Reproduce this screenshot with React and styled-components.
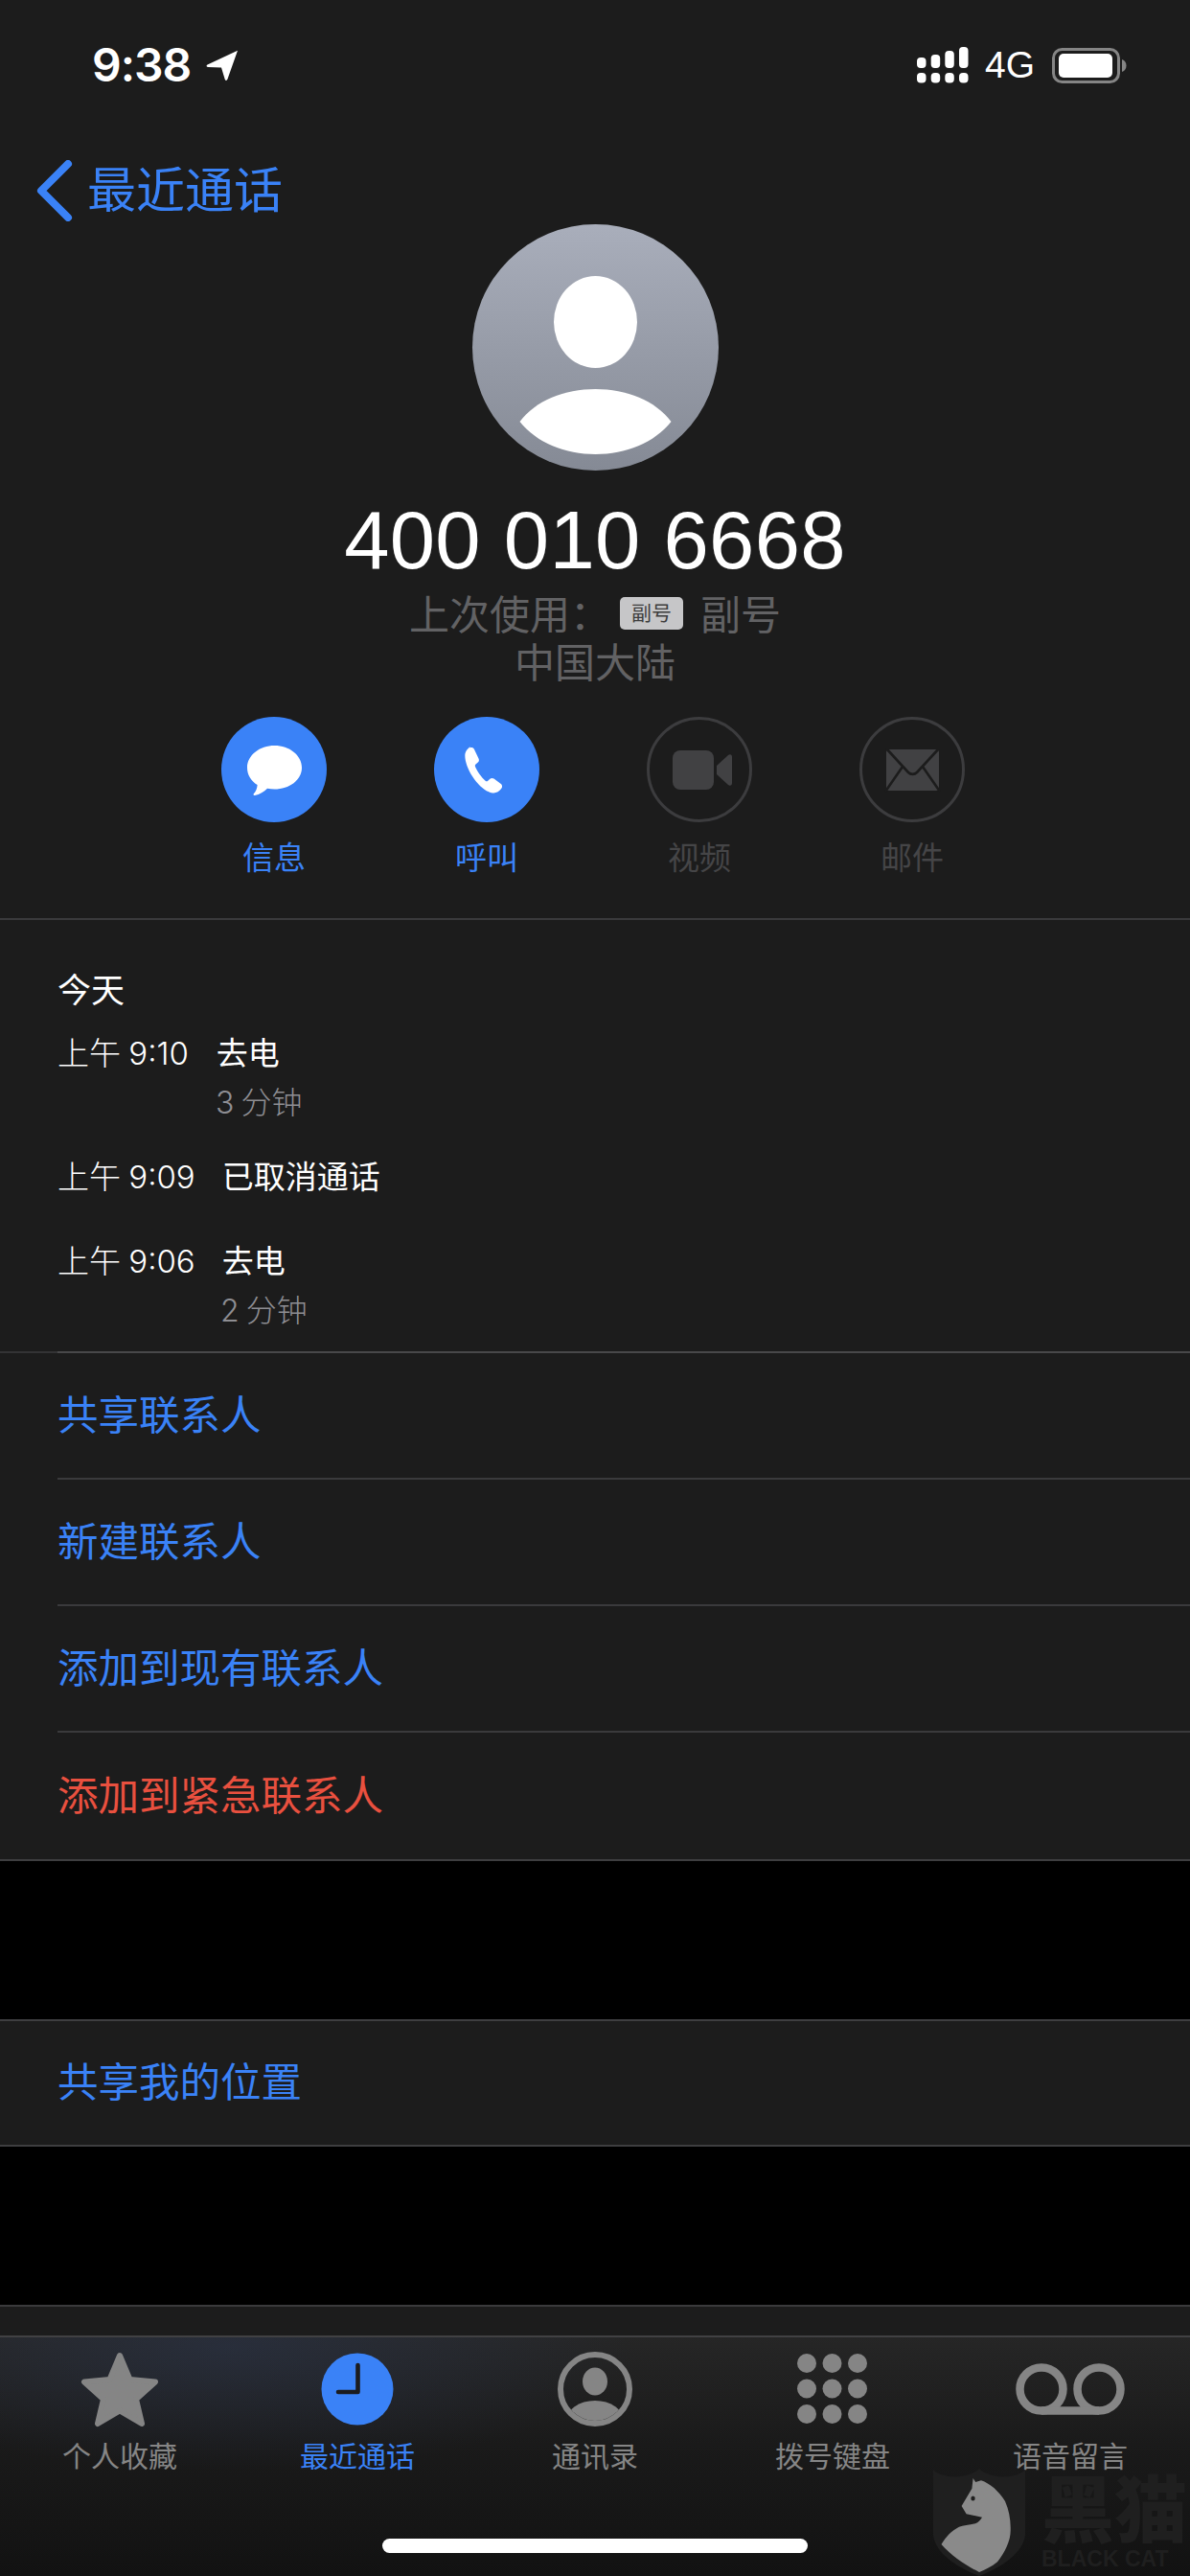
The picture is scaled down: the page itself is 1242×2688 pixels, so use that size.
import React from "react";
import styled, { createGlobalStyle } from "styled-components";

const BLUE = "#3a82f7";
const FONT = `Inter, "Noto Sans CJK SC", sans-serif`;

const GlobalStyle = createGlobalStyle`
    html, body {
        margin: 0;
        padding: 0;
        background: #000;
    }
    * {
        box-sizing: border-box;
    }
`;

const Page = styled.div`
    position: relative;
    width: 1242px;
    height: 2688px;
    overflow: hidden;
    background: #000;
    font-family: ${FONT};
    color: #fff;
    display: flex;
    flex-direction: column;
`;

const StatusBar = styled.div`
    height: 136px;
    background: #1c1c1c;
    display: flex;
    align-items: center;
    justify-content: space-between;
    padding: 0 66px 0 96px;
`;

const StatusLeft = styled.div`
    display: flex;
    align-items: center;
    gap: 16px;
`;

const StatusRight = styled.div`
    display: flex;
    align-items: center;
`;

const Time = styled.span`
    font-size: 48px;
    line-height: 50px;
    font-weight: 600;
    letter-spacing: -1px;
`;

const Network = styled.span`
    font-family: "Liberation Sans", sans-serif;
    font-size: 39px;
    line-height: 40px;
    margin: 0 18px 0 17px;
`;

const NavBar = styled.div`
    height: 98px;
    background: #1c1c1c;
    padding: 31px 0 0 38px;
    display: flex;
    align-items: flex-start;
    gap: 15px;
    color: ${BLUE};
`;

const BackLabel = styled.span`
    font-size: 51px;
    line-height: 64px;
    font-weight: 400;
`;

const Header = styled.div`
    background: #1c1c1c;
    display: flex;
    flex-direction: column;
    align-items: center;
    height: 726px;
    border-bottom: 2px solid #3a3a3c;
`;

const Avatar = styled.div`
    width: 257px;
    height: 257px;
    flex: none;
    border-radius: 50%;
    background: linear-gradient(#a9aebb, #858a95);
`;

const PhoneNumber = styled.div`
    font-family: "Liberation Sans", sans-serif;
    font-size: 85px;
    line-height: 100px;
    letter-spacing: 0.3px;
    margin-top: 23px;
`;

const SubLine = styled.div`
    display: flex;
    align-items: center;
    height: 50px;
    margin-top: ${(p) => p.$top || 0}px;
    font-size: 42px;
    font-weight: 400;
    color: #626264;
`;

const SimBadge = styled.span`
    width: 66px;
    height: 34px;
    margin: 4px 18px 0 10px;
    border-radius: 5px;
    background: #c6c6c8;
    color: #3d3d3d;
    font-size: 21px;
    line-height: 34px;
    text-align: center;
`;

const Actions = styled.div`
    display: flex;
    margin: 35px 4px 0 0;
`;

const Action = styled.div`
    width: 222px;
    display: flex;
    flex-direction: column;
    align-items: center;
    color: ${(p) => (p.$off ? "#454547" : BLUE)};
`;

const ActionCircle = styled.div`
    width: 110px;
    height: 110px;
    border-radius: 50%;
    background: ${(p) => (p.$off ? "transparent" : BLUE)};
    border: ${(p) => (p.$off ? "3px solid #3c3c3e" : "none")};
    position: relative;

    svg {
        display: block;
        position: absolute;
        left: ${(p) => (p.$off ? "-3px" : "0")};
        top: ${(p) => (p.$off ? "-3px" : "0")};
    }
`;

const ActionLabel = styled.span`
    font-size: 33px;
    line-height: 44px;
    margin-top: 15px;
    font-weight: 400;
`;

const History = styled.div`
    background: #1c1c1c;
    height: 450px;
    padding: 47px 0 0 60px;
`;

const DayTitle = styled.div`
    font-size: 35px;
    line-height: 52px;
    margin-bottom: 14px;
`;

const Entry = styled.div`
    min-height: 88px;
    padding-bottom: 25px;

    &:last-child {
        padding-bottom: 0;
    }
`;

const EntryMain = styled.div`
    display: flex;
    font-size: 33px;
    line-height: 52px;
`;

const EntryTime = styled.span`
    font-weight: 300;
    word-spacing: -1px;
    margin-right: ${(p) => p.$gap}px;
`;

const EntryType = styled.span`
    font-size: 33px;
    font-weight: 400;
`;

const EntryDuration = styled.div`
    font-size: 32px;
    line-height: 52px;
    font-weight: 300;
    color: #8e8e93;
    margin-left: ${(p) => p.$left}px;
    word-spacing: -2px;
`;

const RowGroup = styled.div`
    background: #1c1c1c;
    border-top: 2px solid #3e3e40;
    border-bottom: 2px solid #3e3e40;
    padding-left: 60px;
    flex: none;
`;

const FirstGroup = styled(RowGroup)`
    border-top: none;
    box-shadow: inset 0 2px 0 #333335;

    & > div:first-child {
        height: 134px;
        border-top: 2px solid #48484a;
    }
`;

const Row = styled.div`
    height: ${(p) => (p.$height ? p.$height : 132)}px;
    display: flex;
    align-items: center;
    padding-bottom: 8px;
    font-size: 42.5px;
    font-weight: 400;
    color: ${(p) => (p.$danger ? "#e9503f" : BLUE)};
    border-bottom: ${(p) => (p.$plain ? "none" : "2px solid #3a3a3c")};
`;

const Gap = styled.div`
    height: ${(p) => p.$height}px;
    flex: none;
`;

const SheetEnd = styled.div`
    height: 32px;
    background: #1c1c1c;
    border-top: 2px solid #3a3a3c;
    flex: none;
`;

const TabBar = styled.div`
    flex: 1;
    border-top: 2px solid #414143;
    background:
        radial-gradient(ellipse 420px 130px at 240px 10px, rgba(45, 58, 88, 0.42), transparent),
        linear-gradient(#262626, #1a1a1a 45%, #121212 100%);
    position: relative;
    display: flex;
    align-items: flex-start;
    padding: 12px 1px 0;
`;

const Tab = styled.div`
    width: 248.4px;
    display: flex;
    flex-direction: column;
    align-items: center;
    color: ${(p) => (p.$active ? BLUE : "#858585")};
`;

const TabIcon = styled.div`
    height: 84px;
    display: flex;
    align-items: center;
    justify-content: center;
`;

const TabLabel = styled.span`
    font-size: 30px;
    line-height: 40px;
    margin-top: 8px;
    font-weight: 400;
`;

const HomeBar = styled.div`
    position: absolute;
    left: 399px;
    bottom: 24px;
    width: 444px;
    height: 15px;
    border-radius: 8px;
    background: #fff;
`;

const Watermark = styled.div`
    position: absolute;
    left: 973px;
    top: 2575px;
    display: flex;
    gap: 17px;
    white-space: nowrap;
`;

const WatermarkText = styled.div`
    display: flex;
    flex-direction: column;
    padding-top: 8px;
    color: #1f1f1f;
    font-weight: 900;
`;

const WatermarkName = styled.span`
    font-size: 76px;
    line-height: 72px;
`;

const WatermarkEnglish = styled.span`
    font-family: "Liberation Sans", sans-serif;
    font-weight: 700;
    font-size: 23px;
    line-height: 30px;
`;

const Svg = ({ w, h, children, box }) => (
    <svg width={w} height={h} viewBox={box || `0 0 ${w} ${h}`} fill="currentColor">
        {children}
    </svg>
);

const LocationArrow = () => (
    <Svg w={34} h={32}>
        <path d="M33 0.8 L1.5 15.5 C0 16.3 0.5 18 2 18 L16 18.4 L19.8 31 C20.3 32.3 22 32.2 22.4 30.8 Z" />
    </Svg>
);

const SignalBars = () => {
    const bars = [
        { x: 0, top: 11, h: 11 },
        { x: 14.7, top: 8, h: 14 },
        { x: 29.3, top: 4, h: 18 },
        { x: 44, top: 0, h: 22 }
    ];
    return (
        <Svg w={54} h={38}>
            {bars.map((b) => (
                <g key={b.x}>
                    <rect x={b.x} y={b.top} width={9.5} height={b.h} rx={4} />
                    <rect x={b.x} y={27} width={9.5} height={10.5} rx={4} />
                </g>
            ))}
        </Svg>
    );
};

const Battery = () => (
    <Svg w={78} h={37}>
        <rect x={1.5} y={1.5} width={68} height={34} rx={9} fill="none" stroke="#858585" strokeWidth={3} />
        <rect x={7} y={6} width={56} height={25} rx={5} fill="#fff" />
        <path d="M73 12 C76 13 77.5 15.5 77.5 18.5 C77.5 21.5 76 24 73 25 Z" fill="#858585" />
    </Svg>
);

const BackChevron = () => (
    <Svg w={38} h={64}>
        <path d="M33 4 L5 32 L33 60" fill="none" stroke={BLUE} strokeWidth={8} strokeLinecap="round" strokeLinejoin="round" />
    </Svg>
);

const AvatarFigure = () => (
    <Svg w={257} h={257}>
        <ellipse cx={128.5} cy={102} rx={43.5} ry={48} fill="#fff" />
        <path
            d="M49.5 206 C66 184 96 172 128.5 172 C161 172 191 184 207.5 206 C190 228 160 240 128.5 240 C97 240 67 228 49.5 206 Z"
            fill="#fff"
        />
    </Svg>
);

const MessageIcon = () => (
    <Svg w={110} h={110}>
        <path
            d="M55.5 30 C71 30 84 40 84 53 C84 66 71 75.5 55.5 75.5 C53 75.5 50.5 75.2 48 74.7 C44.5 78 40 81 35 82 C33.5 82.2 33 81 34 80 C36 78 37.5 74.5 37.6 71 C31 67 27 60.5 27 53 C27 40 40 30 55.5 30 Z"
            fill="#fff"
        />
    </Svg>
);

const PhoneIcon = () => (
    <Svg w={110} h={110}>
        <path
            d="M37 32.5 c2-1 4-.5 5 1.5 l4.5 9.5 c.8 1.8.3 3.2-1 4.2 l-2 1.8 c-.8.7-.9 1.6-.4 2.7 c2 4.5 6.5 11 10.5 14.5 c.9.8 1.8.8 2.6.1 l2.2-2 c1.2-1.1 2.7-1.2 4.1-.2 l7 5.2 c1.8 1.3 2 3.4.8 5 c-2.5 3.4-5.5 5-9 4.6 c-7-.8-15-8-21-17 c-5-7.5-8-16-8-22 c0-4.2 3-7.5 5.7-9.4 z"
            fill="#fff"
        />
    </Svg>
);

const VideoIcon = () => (
    <Svg w={110} h={110}>
        <rect x={27} y={35} width={43} height={41} rx={8} fill="#414143" />
        <path d="M73 51 L85 40 C87 38.5 89 39.5 89 42 L89 69 C89 71.5 87 72.5 85 71 L73 60 Z" fill="#414143" />
    </Svg>
);

const MailIcon = () => (
    <Svg w={110} h={110}>
        <rect x={28} y={34} width={55} height={43} rx={3} fill="#414143" />
        <path
            d="M28 33 L51 58 C53.5 60.5 57.5 60.5 60 58 L83 33 M27 78 L45 52 M84 78 L66 52"
            fill="none"
            stroke="#1c1c1c"
            strokeWidth={2.6}
        />
    </Svg>
);

const StarIcon = () => (
    <Svg w={84} h={80}>
        <path
            d="M42 5 L52.5 30 L79 32.5 L59 50.5 L65 76 L42 62.5 L19 76 L25 50.5 L5 32.5 L31.5 30 Z"
            stroke="currentColor"
            strokeWidth={6}
            strokeLinejoin="round"
        />
    </Svg>
);

const ClockIcon = () => (
    <Svg w={76} h={76}>
        <circle cx={38} cy={38} r={37.5} />
        <path d="M38.5 13 L38.5 41 L18 41" fill="none" stroke="#1c1c1e" strokeWidth={4.6} strokeLinecap="round" strokeLinejoin="round" />
    </Svg>
);

const ContactsIcon = () => (
    <Svg w={78} h={78}>
        <defs>
            <clipPath id="contact-clip">
                <circle cx={39} cy={39} r={33} />
            </clipPath>
        </defs>
        <circle cx={39} cy={39} r={36} fill="none" stroke="currentColor" strokeWidth={6} />
        <ellipse cx={39} cy={31} rx={13} ry={14.5} />
        <ellipse cx={39} cy={72} rx={30} ry={21} clipPath="url(#contact-clip)" />
    </Svg>
);

const KeypadIcon = () => {
    const cells = [0, 1, 2, 3, 4, 5, 6, 7, 8];
    return (
        <Svg w={74} h={74}>
            {cells.map((c) => (
                <circle key={c} cx={10 + (c % 3) * 26.5} cy={10 + Math.floor(c / 3) * 26.5} r={10} />
            ))}
        </Svg>
    );
};

const VoicemailIcon = () => (
    <Svg w={114} h={54}>
        <circle cx={27} cy={27} r={22.5} fill="none" stroke="currentColor" strokeWidth={8.5} />
        <circle cx={87} cy={27} r={22.5} fill="none" stroke="currentColor" strokeWidth={8.5} />
        <path d="M27 49.5 L87 49.5" stroke="currentColor" strokeWidth={8.5} />
    </Svg>
);

const CatMark = () => (
    <Svg w={97} h={113}>
        <path
            d="M1 2 C10 12 38 12 49 1 C60 12 88 12 97 2 L97 70 C95 90 70 105 49 113 C28 105 3 90 1 70 Z"
            fill="#1f1f1f"
        />
        <path
            d="M42.6 11 L41.4 21.7 L30.6 40 L35.6 48.3 L52 51.7 C50 55 48 57 45 58.3 C38 60 32 60 28 61.7 C20 66 14 72 9.5 80 C20 92 35 102 49 109 C55 107 62 103 68 98.3 C76 88 82 76 81.7 65 C82 54 80 44 76 35 C70 25 60 16 51 13.3 L45.2 15 Z"
            fill="#8a8a8a"
        />
        <ellipse cx={42.5} cy={32} rx={2.2} ry={2.6} fill="#1f1f1f" />
    </Svg>
);

const actions = [
    { label: "信息", icon: <MessageIcon /> },
    { label: "呼叫", icon: <PhoneIcon /> },
    { label: "视频", icon: <VideoIcon />, off: true },
    { label: "邮件", icon: <MailIcon />, off: true }
];

const tabs = [
    { label: "个人收藏", icon: <StarIcon /> },
    { label: "最近通话", icon: <ClockIcon />, active: true },
    { label: "通讯录", icon: <ContactsIcon /> },
    { label: "拨号键盘", icon: <KeypadIcon /> },
    { label: "语音留言", icon: <VoicemailIcon /> }
];

const App = () => {
    return (
        <Page>
            <GlobalStyle />
            <StatusBar>
                <StatusLeft>
                    <Time>9:38</Time>
                    <LocationArrow />
                </StatusLeft>
                <StatusRight>
                    <SignalBars />
                    <Network>4G</Network>
                    <Battery />
                </StatusRight>
            </StatusBar>
            <NavBar>
                <BackChevron />
                <BackLabel>最近通话</BackLabel>
            </NavBar>
            <Header>
                <Avatar>
                    <AvatarFigure />
                </Avatar>
                <PhoneNumber>400 010 6668</PhoneNumber>
                <SubLine $top={-1}>
                    上次使用：
                    <SimBadge>副号</SimBadge>
                    副号
                </SubLine>
                <SubLine>中国大陆</SubLine>
                <Actions>
                    {actions.map((a) => (
                        <Action key={a.label} $off={a.off}>
                            <ActionCircle $off={a.off}>{a.icon}</ActionCircle>
                            <ActionLabel>{a.label}</ActionLabel>
                        </Action>
                    ))}
                </Actions>
            </Header>
            <History>
                <DayTitle>今天</DayTitle>
                <Entry>
                    <EntryMain>
                        <EntryTime $gap={29}>上午 9:10</EntryTime>
                        <EntryType>去电</EntryType>
                    </EntryMain>
                    <EntryDuration $left={165}>3 分钟</EntryDuration>
                </Entry>
                <Entry>
                    <EntryMain>
                        <EntryTime $gap={28}>上午 9:09</EntryTime>
                        <EntryType>已取消通话</EntryType>
                    </EntryMain>
                </Entry>
                <Entry>
                    <EntryMain>
                        <EntryTime $gap={28}>上午 9:06</EntryTime>
                        <EntryType>去电</EntryType>
                    </EntryMain>
                    <EntryDuration $left={170}>2 分钟</EntryDuration>
                </Entry>
            </History>
            <FirstGroup>
                <Row>共享联系人</Row>
                <Row>新建联系人</Row>
                <Row>添加到现有联系人</Row>
                <Row $danger $plain>添加到紧急联系人</Row>
            </FirstGroup>
            <Gap $height={165} />
            <RowGroup>
                <Row $plain $height={129}>共享我的位置</Row>
            </RowGroup>
            <Gap $height={165} />
            <SheetEnd />
            <TabBar>
                {tabs.map((t) => (
                    <Tab key={t.label} $active={t.active}>
                        <TabIcon>{t.icon}</TabIcon>
                        <TabLabel>{t.label}</TabLabel>
                    </Tab>
                ))}
                <HomeBar />
            </TabBar>
            <Watermark>
                <CatMark />
                <WatermarkText>
                    <WatermarkName>黑猫</WatermarkName>
                    <WatermarkEnglish>BLACK CAT</WatermarkEnglish>
                </WatermarkText>
            </Watermark>
        </Page>
    );
};

export default App;
